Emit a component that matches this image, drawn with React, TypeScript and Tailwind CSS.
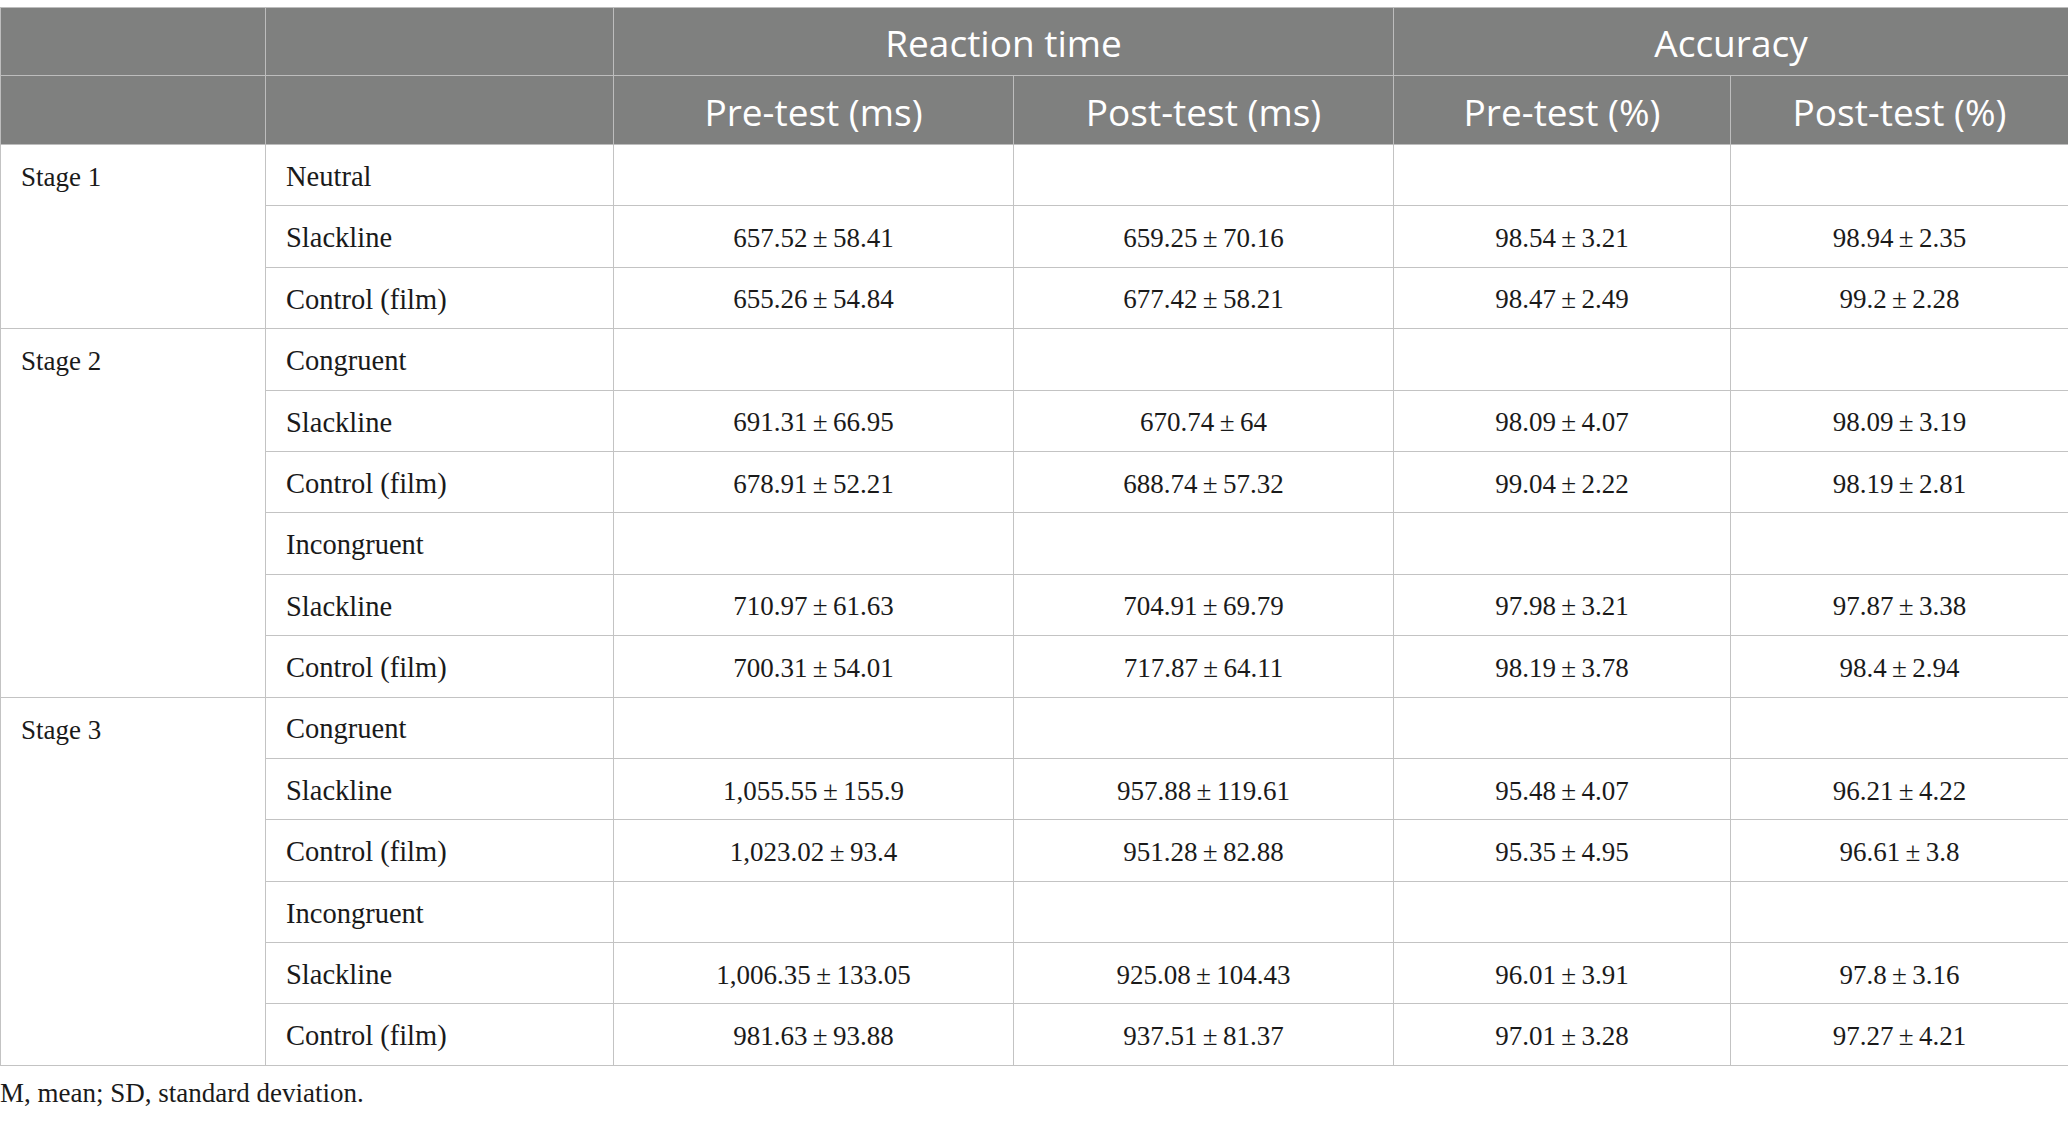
import React from "react";

type Row = { label: string; values?: string[] };
type Stage = { name: string; rows: Row[] };

const pm = (a: string, b: string) => `${a}\u2009±\u2009${b}`;

const stages: Stage[] = [
  {
    name: "Stage 1",
    rows: [
      { label: "Neutral" },
      { label: "Slackline", values: [pm("657.52", "58.41"), pm("659.25", "70.16"), pm("98.54", "3.21"), pm("98.94", "2.35")] },
      { label: "Control (film)", values: [pm("655.26", "54.84"), pm("677.42", "58.21"), pm("98.47", "2.49"), pm("99.2", "2.28")] },
    ],
  },
  {
    name: "Stage 2",
    rows: [
      { label: "Congruent" },
      { label: "Slackline", values: [pm("691.31", "66.95"), pm("670.74", "64"), pm("98.09", "4.07"), pm("98.09", "3.19")] },
      { label: "Control (film)", values: [pm("678.91", "52.21"), pm("688.74", "57.32"), pm("99.04", "2.22"), pm("98.19", "2.81")] },
      { label: "Incongruent" },
      { label: "Slackline", values: [pm("710.97", "61.63"), pm("704.91", "69.79"), pm("97.98", "3.21"), pm("97.87", "3.38")] },
      { label: "Control (film)", values: [pm("700.31", "54.01"), pm("717.87", "64.11"), pm("98.19", "3.78"), pm("98.4", "2.94")] },
    ],
  },
  {
    name: "Stage 3",
    rows: [
      { label: "Congruent" },
      { label: "Slackline", values: [pm("1,055.55", "155.9"), pm("957.88", "119.61"), pm("95.48", "4.07"), pm("96.21", "4.22")] },
      { label: "Control (film)", values: [pm("1,023.02", "93.4"), pm("951.28", "82.88"), pm("95.35", "4.95"), pm("96.61", "3.8")] },
      { label: "Incongruent" },
      { label: "Slackline", values: [pm("1,006.35", "133.05"), pm("925.08", "104.43"), pm("96.01", "3.91"), pm("97.8", "3.16")] },
      { label: "Control (film)", values: [pm("981.63", "93.88"), pm("937.51", "81.37"), pm("97.01", "3.28"), pm("97.27", "4.21")] },
    ],
  },
];

const th = "border border-[#bdbdbd] bg-[#7f807f] text-white font-normal text-center align-middle text-[37px] leading-none pt-[2px]";
const td = "border border-[#c3c3c3] h-[61.4px] align-middle leading-none text-[#1a1a1a] pt-[4px]";

export default function App() {
  return (
    <div className="bg-white w-[2068px] min-h-[1122px] pt-[7px] font-['Liberation_Serif',serif]">
      <table className="w-full border-collapse table-fixed">
        <colgroup>
          <col className="w-[265px]" />
          <col className="w-[348px]" />
          <col className="w-[400px]" />
          <col className="w-[380px]" />
          <col className="w-[337px]" />
          <col className="w-[338px]" />
        </colgroup>
        <thead className="font-['Open_Sans',sans-serif]">
          <tr className="h-[68px]">
            <th className={th}></th>
            <th className={th}></th>
            <th className={th} colSpan={2}>Reaction time</th>
            <th className={th} colSpan={2}>Accuracy</th>
          </tr>
          <tr className="h-[69px]">
            <th className={th}></th>
            <th className={th}></th>
            <th className={th}>Pre-test (ms)</th>
            <th className={th}>Post-test (ms)</th>
            <th className={th}>Pre-test (%)</th>
            <th className={th}>Post-test (%)</th>
          </tr>
        </thead>
        <tbody>
          {stages.map((stage) =>
            stage.rows.map((row, i) => (
              <tr key={stage.name + i}>
                {i === 0 && (
                  <td rowSpan={stage.rows.length} className="border border-[#c3c3c3] align-top pl-[20px] pt-[19px] text-[27px] leading-none text-[#1a1a1a]">
                    {stage.name}
                  </td>
                )}
                <td className={`${td} pl-[20px] text-[28.5px]`}>{row.label}</td>
                {[0, 1, 2, 3].map((j) => (
                  <td key={j} className={`${td} text-center text-[27px]`}>
                    {row.values ? row.values[j] : ""}
                  </td>
                ))}
              </tr>
            ))
          )}
        </tbody>
      </table>
      <p className="mt-[14px] text-[27px] leading-none text-[#1a1a1a]">M, mean; SD, standard deviation.</p>
    </div>
  );
}
